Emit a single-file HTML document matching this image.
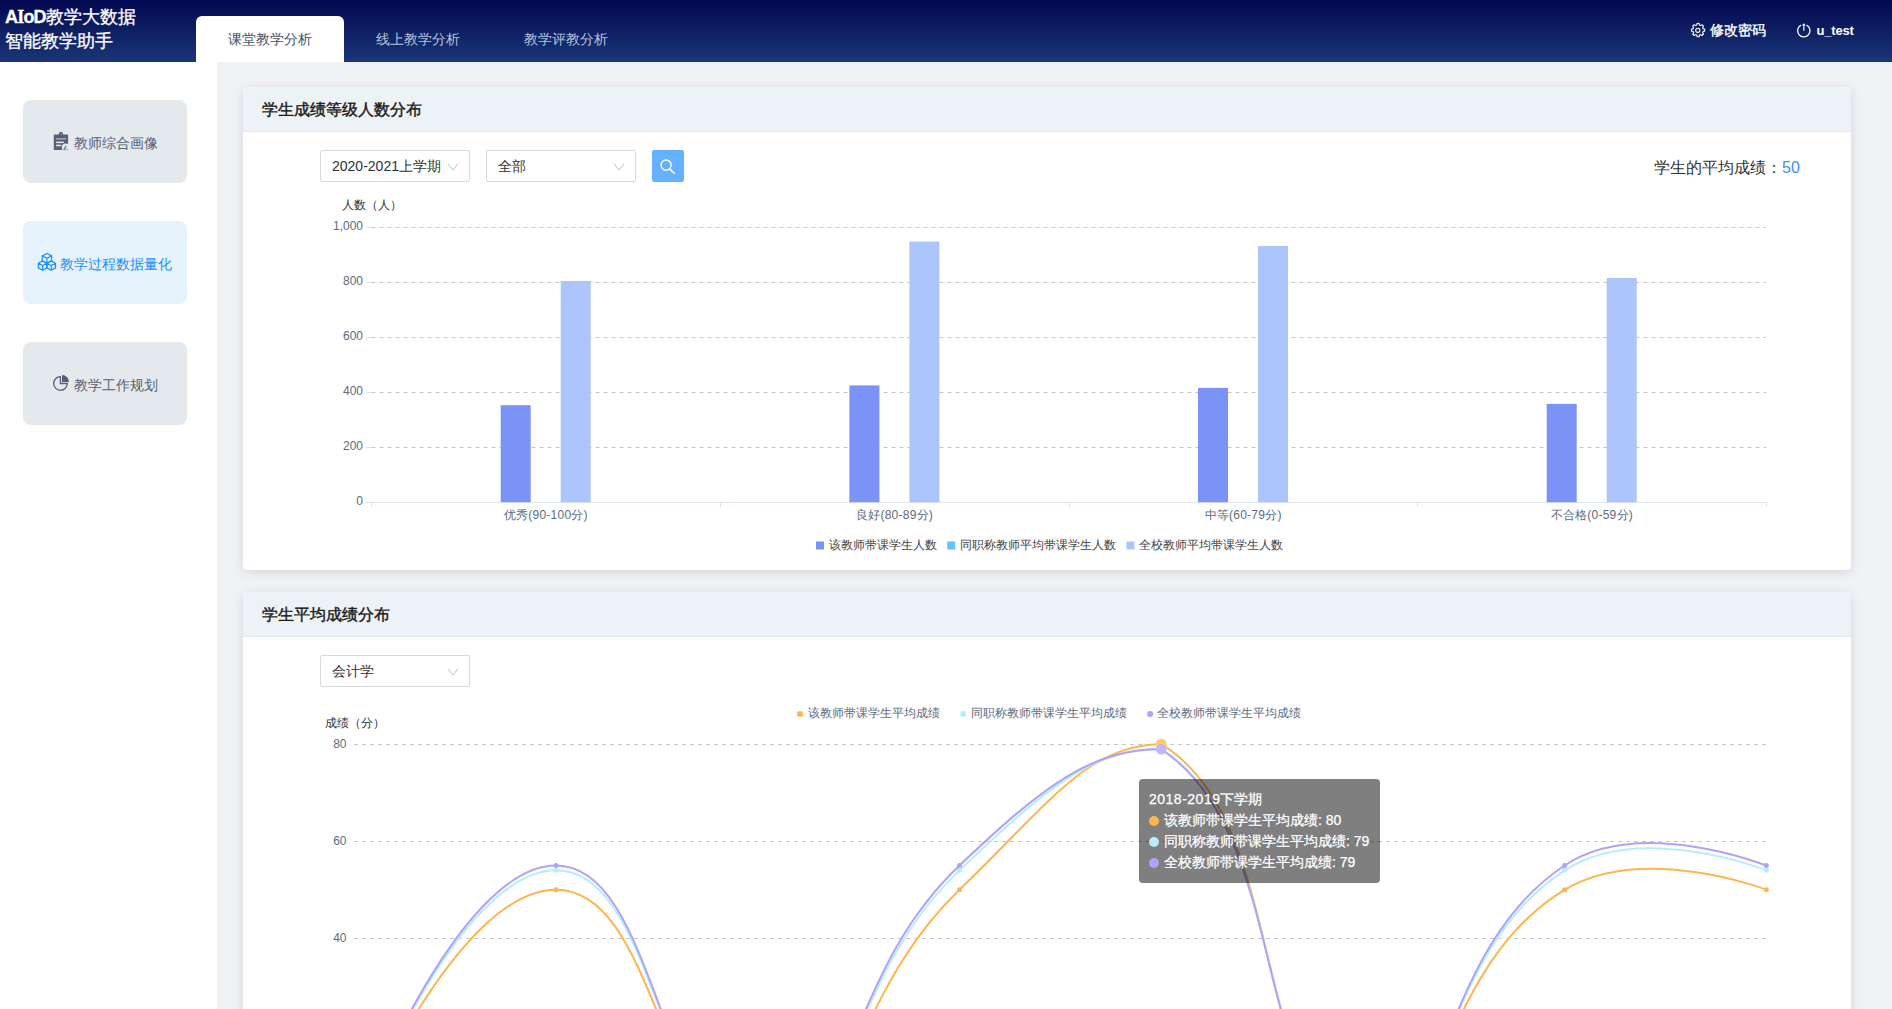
<!DOCTYPE html>
<html><head><meta charset="utf-8"><title>AIoD</title>
<style>
*{margin:0;padding:0;box-sizing:border-box}
html,body{width:1892px;height:1009px;overflow:hidden;background:#fff;font-family:"Liberation Sans",sans-serif}
.abs{position:absolute}
.hdr{left:0;top:0;width:1892px;height:62px;background:linear-gradient(#020850,#1b3678)}
.logo{left:5px;top:5px;color:#fff;font-size:18px;line-height:24px;white-space:nowrap;-webkit-text-stroke:.3px #fff}
.logo b{font-weight:bold}
.tab{top:16px;width:148px;height:46px;font-size:14px;line-height:46px;text-align:center;color:#b9c1d9}
.tab.on{background:#fff;border-radius:6px 6px 0 0;color:#464e66}
.hr{top:22px;height:16px;color:#fff;font-size:14px;line-height:16px;white-space:nowrap}
.main{left:217px;top:62px;width:1675px;height:947px;background:#f0f2f5}
.side{top:0;width:164px;height:83px;border-radius:8px;left:23px;background:#e4e9ed;color:#5b6273;font-size:14px;line-height:83px;white-space:nowrap}
.side.on{background:#e6f3fd;color:#1890ff}
.stx{font-size:14px;line-height:20px;color:#566074;white-space:nowrap}
.card{left:243px;width:1608px;background:#fff;border-radius:4px 0 4px 4px;box-shadow:0 2px 12px 0 rgba(0,0,0,.12);overflow:hidden}
.ch{height:45px;background:#edf2f6;border-bottom:1px solid #e3e8ee;font-size:16px;font-weight:400;-webkit-text-stroke:.4px #1a1a1a;color:#1a1a1a;line-height:45px;padding-left:19px}
.sel{height:32px;border:1px solid #d9d9d9;border-radius:2px;background:#fff;font-size:14px;color:#303133;line-height:30px;padding-left:11px;white-space:nowrap}
.sel svg{position:absolute;right:10px;top:11px}
.btn{left:652px;top:150px;width:32px;height:32px;background:#66b1ff;border-radius:2px}
svg.ov{position:absolute;left:0;top:0;width:1892px;height:1009px}
.ax{font-size:12px;fill:#5c6b80}
.lg{font-size:12px;fill:#444}
.an{font-size:12px;fill:#333}
.tip{left:1139px;top:779px;width:241px;height:104px;background:rgba(0,0,0,.5);-webkit-text-stroke:.25px #fff;border-radius:4px;color:#fff;font-size:14px;line-height:21px;padding:10px 10px;white-space:nowrap}
.tip span{display:inline-block;width:10px;height:10px;border-radius:5px;margin-right:5px;vertical-align:-1px}
</style></head><body>
<div class="abs hdr"></div>
<div class="abs logo"><b style="letter-spacing:-.8px">A<span style="font-family:'Liberation Serif',serif">I</span>oD</b>教学大数据<br>智能教学助手</div>
<div class="abs tab on" style="left:196px">课堂教学分析</div>
<div class="abs tab" style="left:344px">线上教学分析</div>
<div class="abs tab" style="left:492px">教学评教分析</div>
<svg class="abs" style="left:1688px;top:20px" width="20" height="20" viewBox="1688 20 20 20"><path d="M1697.8 23.3l1.3.2.4 1.6 1.1.5 1.4-.9 1.5 1.5-.9 1.4.5 1.1 1.6.4v2l-1.6.4-.5 1.1.9 1.4-1.5 1.5-1.4-.9-1.1.5-.4 1.6h-2l-.4-1.6-1.1-.5-1.4.9-1.5-1.5.9-1.4-.5-1.1-1.6-.4v-2l1.6-.4.5-1.1-.9-1.4 1.5-1.5 1.4.9 1.1-.5.4-1.6z" fill="none" stroke="#fff" stroke-width="1.1" stroke-linejoin="round"/><circle cx="1697.8" cy="30.3" r="2.1" fill="none" stroke="#fff" stroke-width="1.1"/></svg>
<div class="abs hr" style="left:1710px;-webkit-text-stroke:.35px #fff">修改密码</div>
<svg class="abs" style="left:1794px;top:20px" width="20" height="20" viewBox="1794 20 20 20"><path d="M1801 25.2A6.2 6.2 0 1 0 1806.6 25.2" fill="none" stroke="#fff" stroke-width="1.3"/><path d="M1803.8 24.5v6.3" stroke="#d0d4e4" stroke-width="1.5"/><path d="M1801.9 25.6l1.9-2.3 1.9 2.3z" fill="#fff"/></svg>
<div class="abs hr" style="left:1816.5px;top:23px;font-weight:bold;font-size:13px;letter-spacing:-.2px">u_test</div>
<div class="abs main"></div>
<div class="abs side" style="top:100px"></div>
<div class="abs side on" style="top:221px"></div>
<div class="abs side" style="top:342px"></div>
<svg class="abs" style="left:50px;top:128px" width="22" height="26" viewBox="50 128 22 26">
<path d="M54.3 134.4h4.4a2.2 2.6 0 0 1 4.4 0h4.5q.5 0 .5.5v14.6q0 .5-.5.5h-13.3q-.5 0-.5-.5v-14.6q0-.5.5-.5z" fill="#566074"/>
<rect x="60.3" y="133.6" width="1.8" height="1" fill="#9aa1ad"/>
<rect x="56.1" y="138" width="9.9" height="1.7" fill="#9aa1ad"/>
<rect x="56.1" y="141.6" width="7.8" height="1.5" fill="#e4e9ed"/>
<rect x="56.1" y="144.7" width="5.2" height="1.5" fill="#e4e9ed"/>
<circle cx="65.8" cy="147.6" r="4" fill="#e4e9ed"/>
<path d="M63.8 149.6l2.4-3.6" stroke="#566074" stroke-width="1.1"/>
<path d="M63.5 149.7h5" stroke="#8f96a3" stroke-width=".8"/>
</svg>
<svg class="abs" style="left:34px;top:249px" width="26" height="26" viewBox="34 249 26 26" fill="none" stroke="#1890ff" stroke-width="1.2" stroke-linejoin="round">
<path d="M46.9 253.5l4.7 2.4v4.9l-4.7 2.4-4.7-2.4v-4.9z M42.2 255.9l4.7 2.4 4.7-2.4 M46.9 258.3v4.9"/>
<path d="M42.6 260.9l4.3 2.3v4.7l-4.3 2.3-4.3-2.3v-4.7z M38.3 263.2l4.3 2.3 4.3-2.3 M42.6 265.5v4.7"/>
<path d="M51.2 260.9l4.3 2.3v4.7l-4.3 2.3-4.3-2.3v-4.7z M46.9 263.2l4.3 2.3 4.3-2.3 M51.2 265.5v4.7"/>
</svg>
<svg class="abs" style="left:48px;top:370px" width="26" height="26" viewBox="48 370 26 26">
<path d="M60.4 376.7A6.8 6.8 0 1 0 67.3 383.5H60.4z" fill="none" stroke="#566074" stroke-width="1.3"/>
<path d="M62 375A7 7 0 0 1 69 381.9H62z" fill="#566074"/>
</svg>
<div class="abs stx" style="left:74px;top:133px">教师综合画像</div>
<div class="abs stx" style="left:60px;top:254px;color:#1890ff">教学过程数据量化</div>
<div class="abs stx" style="left:74px;top:375px">教学工作规划</div>
<div class="abs card" style="top:87px;height:483px"><div class="ch">学生成绩等级人数分布</div></div>
<div class="abs card" style="top:592px;height:500px"><div class="ch">学生平均成绩分布</div></div>
<div class="abs sel" style="left:320px;top:150px;width:150px">2020-2021上学期<svg width="12" height="9" viewBox="0 0 12 9"><path d="M1 1.7L6 8 11 1.7" fill="none" stroke="#c0c0c0" stroke-width="1"/></svg></div>
<div class="abs sel" style="left:486px;top:150px;width:150px">全部<svg width="12" height="9" viewBox="0 0 12 9"><path d="M1 1.7L6 8 11 1.7" fill="none" stroke="#c0c0c0" stroke-width="1"/></svg></div>
<div class="abs btn"><svg width="32" height="32" viewBox="0 0 32 32"><circle cx="14.1" cy="15.1" r="5.1" fill="none" stroke="#fff" stroke-width="1.4"/><path d="M17.9 19.1l4.3 4.2" stroke="#fff" stroke-width="1.5" stroke-linecap="round"/></svg></div>
<div class="abs" style="left:1654px;top:158px;font-size:16px;line-height:20px;color:#333;white-space:nowrap">学生的平均成绩：<span style="color:#3d8ef5">50</span></div>
<div class="abs sel" style="left:320px;top:655px;width:150px">会计学<svg width="12" height="9" viewBox="0 0 12 9"><path d="M1 1.7L6 8 11 1.7" fill="none" stroke="#c0c0c0" stroke-width="1"/></svg></div>
<svg class="ov" viewBox="0 0 1892 1009" style="font-family:'Liberation Sans',sans-serif">
<line x1="371.4" y1="227.5" x2="1766" y2="227.5" stroke="#c6c6c6" stroke-dasharray="4 4"/>
<line x1="366.2" y1="227.5" x2="371.4" y2="227.5" stroke="#e0e6f1"/>
<text x="363" y="229.9" text-anchor="end" class="ax">1,000</text>
<line x1="371.4" y1="282.5" x2="1766" y2="282.5" stroke="#c6c6c6" stroke-dasharray="4 4"/>
<line x1="366.2" y1="282.5" x2="371.4" y2="282.5" stroke="#e0e6f1"/>
<text x="363" y="284.9" text-anchor="end" class="ax">800</text>
<line x1="371.4" y1="337.5" x2="1766" y2="337.5" stroke="#c6c6c6" stroke-dasharray="4 4"/>
<line x1="366.2" y1="337.5" x2="371.4" y2="337.5" stroke="#e0e6f1"/>
<text x="363" y="339.9" text-anchor="end" class="ax">600</text>
<line x1="371.4" y1="392.5" x2="1766" y2="392.5" stroke="#c6c6c6" stroke-dasharray="4 4"/>
<line x1="366.2" y1="392.5" x2="371.4" y2="392.5" stroke="#e0e6f1"/>
<text x="363" y="394.8" text-anchor="end" class="ax">400</text>
<line x1="371.4" y1="447.5" x2="1766" y2="447.5" stroke="#c6c6c6" stroke-dasharray="4 4"/>
<line x1="366.2" y1="447.5" x2="371.4" y2="447.5" stroke="#e0e6f1"/>
<text x="363" y="449.8" text-anchor="end" class="ax">200</text>
<text x="363" y="504.8" text-anchor="end" class="ax">0</text>
<line x1="366" y1="502.5" x2="1766" y2="502.5" stroke="#e0e6f1"/>
<line x1="371.5" y1="502" x2="371.5" y2="507" stroke="#e0e6f1"/>
<line x1="720.5" y1="502" x2="720.5" y2="507" stroke="#e0e6f1"/>
<line x1="1069.5" y1="502" x2="1069.5" y2="507" stroke="#e0e6f1"/>
<line x1="1417.5" y1="502" x2="1417.5" y2="507" stroke="#e0e6f1"/>
<line x1="1766.5" y1="502" x2="1766.5" y2="507" stroke="#e0e6f1"/>
<rect x="500.7" y="405.2" width="30" height="97.0" fill="#7b93f6"/>
<rect x="560.7" y="281.0" width="30" height="221.2" fill="#adc5fd"/>
<text x="545.8" y="519" text-anchor="middle" class="ax" letter-spacing=".25">优秀(90-100分)</text>
<rect x="849.4" y="385.4" width="30" height="116.8" fill="#7b93f6"/>
<rect x="909.4" y="241.6" width="30" height="260.6" fill="#adc5fd"/>
<text x="894.5" y="519" text-anchor="middle" class="ax" letter-spacing=".25">良好(80-89分)</text>
<rect x="1198.0" y="387.9" width="30" height="114.3" fill="#7b93f6"/>
<rect x="1258.0" y="246.0" width="30" height="256.2" fill="#adc5fd"/>
<text x="1243.1" y="519" text-anchor="middle" class="ax" letter-spacing=".25">中等(60-79分)</text>
<rect x="1546.7" y="403.9" width="30" height="98.3" fill="#7b93f6"/>
<rect x="1606.7" y="278.0" width="30" height="224.2" fill="#adc5fd"/>
<text x="1591.8" y="519" text-anchor="middle" class="ax" letter-spacing=".25">不合格(0-59分)</text>
<rect x="816" y="541.5" width="8" height="8" fill="#7b93f6"/>
<text x="829" y="549" class="lg">该教师带课学生人数</text>
<rect x="947.2" y="541.5" width="8" height="8" fill="#6ac0f9"/>
<text x="960" y="549" class="lg">同职称教师平均带课学生人数</text>
<rect x="1126.4" y="541.5" width="8" height="8" fill="#adc5fd"/>
<text x="1139" y="549" class="lg">全校教师平均带课学生人数</text>
<text x="341.5" y="209" class="an">人数（人）</text>
<line x1="354" y1="744.5" x2="1766" y2="744.5" stroke="#c6c6c6" stroke-dasharray="4 4"/>
<text x="346.5" y="747.8" text-anchor="end" class="ax">80</text>
<line x1="354" y1="841.5" x2="1766" y2="841.5" stroke="#c6c6c6" stroke-dasharray="4 4"/>
<text x="346.5" y="844.9" text-anchor="end" class="ax">60</text>
<line x1="354" y1="938.5" x2="1766" y2="938.5" stroke="#c6c6c6" stroke-dasharray="4 4"/>
<text x="346.5" y="941.9" text-anchor="end" class="ax">40</text>
<line x1="354" y1="1035.5" x2="1766" y2="1035.5" stroke="#c6c6c6" stroke-dasharray="4 4"/>
<text x="346.5" y="1038.9" text-anchor="end" class="ax">20</text>
<text x="324.5" y="727" class="an">成绩（分）</text>
<path d="M354.40,1132.40C354.40,1132.40 455.25,889.77 556.10,889.77C656.95,889.77 656.95,1132.40 757.80,1132.40C858.65,1132.40 846.72,998.31 959.50,889.77C1048.42,804.21 1088.09,744.20 1161.20,744.20C1289.79,821.54 1245.72,1090.11 1362.90,1132.40C1447.42,1132.40 1441.56,963.78 1564.60,889.77C1643.26,842.47 1766.30,889.77 1766.30,889.77" fill="none" stroke="#fdb64f" stroke-width="2"/>
<circle cx="354.40" cy="1132.40" r="2.5" fill="#fdb64f"/>
<circle cx="556.10" cy="889.77" r="2.5" fill="#fdb64f"/>
<circle cx="757.80" cy="1132.40" r="2.5" fill="#fdb64f"/>
<circle cx="959.50" cy="889.77" r="2.5" fill="#fdb64f"/>
<circle cx="1161.20" cy="744.20" r="5.5" fill="#ffcd5c"/>
<circle cx="1362.90" cy="1132.40" r="2.5" fill="#fdb64f"/>
<circle cx="1564.60" cy="889.77" r="2.5" fill="#fdb64f"/>
<circle cx="1766.30" cy="889.77" r="2.5" fill="#fdb64f"/>
<path d="M354.40,1132.40C354.40,1132.40 455.25,870.37 556.10,870.37C656.95,870.37 656.95,1132.40 757.80,1132.40C858.65,1132.40 841.67,982.34 959.50,870.37C1043.37,790.66 1090.19,749.05 1161.20,749.05C1291.89,833.94 1248.52,1098.00 1362.90,1132.40C1450.22,1132.40 1439.32,951.74 1564.60,870.37C1641.02,820.73 1766.30,870.37 1766.30,870.37" fill="none" stroke="#b6eef8" stroke-width="2"/>
<circle cx="354.40" cy="1132.40" r="2.5" fill="#b6eef8"/>
<circle cx="556.10" cy="870.37" r="2.5" fill="#b6eef8"/>
<circle cx="757.80" cy="1132.40" r="2.5" fill="#b6eef8"/>
<circle cx="959.50" cy="870.37" r="2.5" fill="#b6eef8"/>
<circle cx="1161.20" cy="749.05" r="5.5" fill="#cdf6fc"/>
<circle cx="1362.90" cy="1132.40" r="2.5" fill="#b6eef8"/>
<circle cx="1564.60" cy="870.37" r="2.5" fill="#b6eef8"/>
<circle cx="1766.30" cy="870.37" r="2.5" fill="#b6eef8"/>
<path d="M354.40,1132.40C354.40,1132.40 455.25,865.51 556.10,865.51C656.95,865.51 656.95,1132.40 757.80,1132.40C858.65,1132.40 840.59,978.51 959.50,865.51C1042.29,786.84 1090.67,749.05 1161.20,749.05C1292.37,835.84 1249.09,1099.54 1362.90,1132.40C1450.79,1132.40 1438.77,948.76 1564.60,865.51C1640.47,815.32 1766.30,865.51 1766.30,865.51" fill="none" stroke="#b0a2fb" stroke-width="2"/>
<circle cx="354.40" cy="1132.40" r="2.5" fill="#b0a2fb"/>
<circle cx="556.10" cy="865.51" r="2.5" fill="#b0a2fb"/>
<circle cx="757.80" cy="1132.40" r="2.5" fill="#b0a2fb"/>
<circle cx="959.50" cy="865.51" r="2.5" fill="#b0a2fb"/>
<circle cx="1161.20" cy="749.05" r="5.5" fill="#c4b6fc"/>
<circle cx="1362.90" cy="1132.40" r="2.5" fill="#b0a2fb"/>
<circle cx="1564.60" cy="865.51" r="2.5" fill="#b0a2fb"/>
<circle cx="1766.30" cy="865.51" r="2.5" fill="#b0a2fb"/>
<circle cx="800" cy="714" r="3" fill="#fdb64f"/>
<text x="807.8" y="716.8" class="ax">该教师带课学生平均成绩</text>
<circle cx="963.2" cy="714" r="3" fill="#b6eef8"/>
<text x="970.5" y="716.8" class="ax">同职称教师带课学生平均成绩</text>
<circle cx="1150.2" cy="714" r="3" fill="#b0a2fb"/>
<text x="1157.3" y="716.8" class="ax">全校教师带课学生平均成绩</text>
</svg>
<div class="abs tip"><b style="font-weight:normal;letter-spacing:.5px">2018-2019</b>下学期<br><span style="background:#fdb64f"></span>该教师带课学生平均成绩: 80<br><span style="background:#b6eef8"></span>同职称教师带课学生平均成绩: 79<br><span style="background:#b0a2fb"></span>全校教师带课学生平均成绩: 79</div>
</body></html>
